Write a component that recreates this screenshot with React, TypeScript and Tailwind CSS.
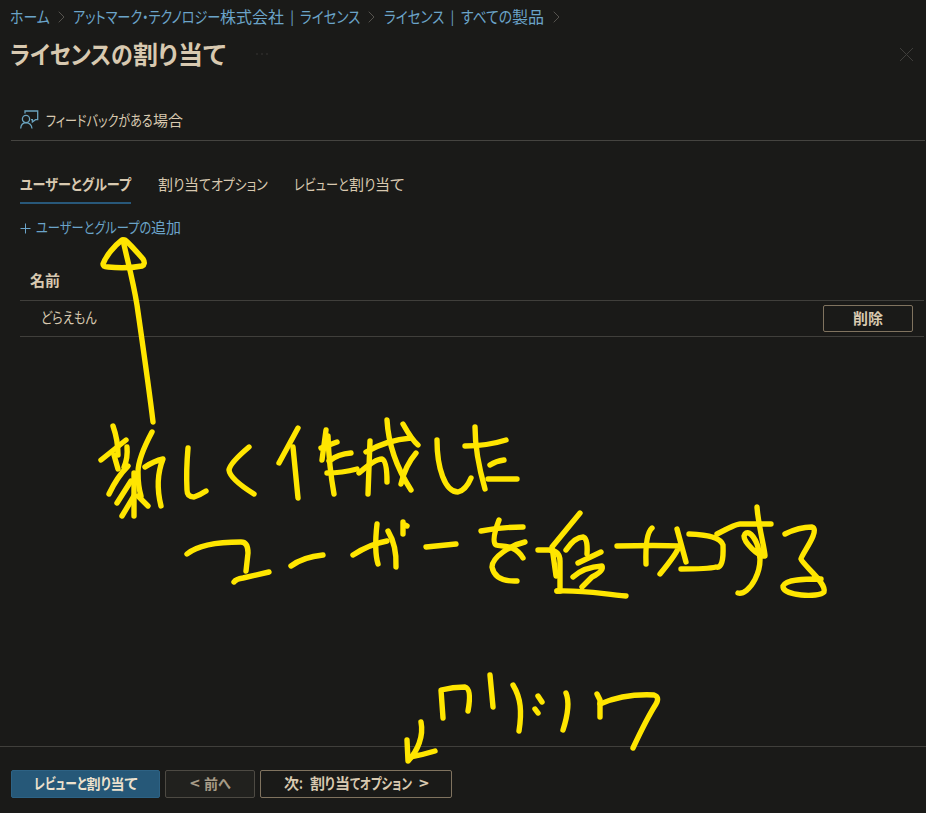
import { useLayoutEffect, useRef, useState } from 'react';

// Narrow kana run: squeezed horizontally to the given width
const Kana = ({ w, children }: { w: number; children: string }) => {
    const ref = useRef<HTMLSpanElement>(null);
    const [scale, setScale] = useState(1);

    useLayoutEffect(() => {
        if (ref.current) setScale(w / ref.current.offsetWidth);
    }, [w, children]);

    return (
        <span className="inline-block whitespace-pre [font-feature-settings:'palt']" style={{ width: w }}>
            <span ref={ref} className="inline-block origin-left" style={{ transform: `scaleX(${scale})` }}>{children}</span>
        </span>
    );
};

const Chevron = () => (
    <svg className="w-[7px] h-3 shrink-0" viewBox="0 0 7 12" fill="none" stroke="#55534e">
        <path d="M.7 .7 6 6 .7 11.3" />
    </svg>
);

// Handwritten notes
const strokes = [
    // arrow to the add link
    'M153 422C149 388 142 340 137 305C133 280 127 259 123 240',
    'M122 240C114 246 106 256 103 264Q103 267 108 267Q126 269 142 266Q146 264 143 259C136 251 129 243 125 240Z',
    // 新
    'M113 426Q118 440 118 455', 'M101 460 126 440', 'M127 447Q128 458 124 467', 'M114 455 118 469',
    'M128 466Q117 477 109 494', 'M131 481 117 503', 'M134 473V516', 'M134 496 122 516', 'M138 496 148 506',
    'M152 432C144 447 138 460 138 472Q138 486 141 496', 'M145 467Q154 461 163 459C157 474 157 490 161 506',
    // しく
    'M188 448Q186 471 187 490Q187 497 194 497Q200 495 206 491', 'M249 447Q230 463 229 470Q230 479 254 494',
    // 作
    'M298 428 279 463', 'M293 447 298 498',
    'M326 430 322 460', 'M321 448 337 442', 'M328 436Q329 466 334 494', 'M329 461Q338 454 351 453', 'M327 473Q342 473 357 469',
    // 成
    'M370 441 368 494', 'M366 452Q387 440 411 438', 'M359 473Q375 459 382 459Q387 461 387 482',
    'M387 420Q389 456 411 490', 'M403 424Q412 440 418 445', 'M416 453Q405 466 401 484',
    // した
    'M437 440C437 468 445 492 458 492Q466 490 471 478', 'M475 427Q475 454 485 489', 'M465 446Q487 446 506 440', 'M490 465Q496 461 504 460', 'M488 479H517',
    // ユーザー
    'M187 554C199 544 221 542 241 542Q248 542 248 553L246 571', 'M234 582Q236 579 243 578L269 572',
    'M291 566Q303 557 323 555', 'M353 555Q370 544 387 541', 'M377 524Q374 551 378 564', 'M388 531Q397 546 396 567',
    'M403 522V534', 'M405 525 407 526', 'M426 547 456 544',
    // を
    'M481 531Q502 527 523 527', 'M499 520Q491 541 496 545C502 547 515 544 523 558', 'M525 542C511 545 492 557 492 567Q495 582 517 581',
    // 追
    'M580 513 552 547 556 576', 'M538 550H549Q560 551 560 561V591H557', 'M557 591C586 590 601 594 626 596',
    'M566 550Q575 537 583 537Q588 538 587 554', 'M578 563 601 552', 'M573 577Q584 567 602 566Q604 571 592 577L582 587',
    // 加
    'M617 546Q658 545 679 546Q678 552 660 574', 'M652 528Q645 534 646 564', 'M677 529 686 562',
    'M689 534Q720 535 723 545Q724 569 716 567Q708 569 681 569',
    // する
    'M717 534Q736 524 740 524H771', 'M757 507C758 524 765 550 765 556C758 557 744 542 744 536C746 530 752 532 757 544C767 570 748 596 738 593',
    'M785 534Q799 527 812 527C821 530 801 555 801 559C803 565 827 583 824 592C819 598 782 596 783 586C786 579 805 579 821 579',
    // arrow to the next button
    'M421 722C424 737 417 751 409 760', 'M407 740 408 761', 'M410 757Q422 755 435 751',
    // クリック
    'M443 718 441 690Q453 687 465 687Q472 689 468 711', 'M490 675 493 707', 'M513 685C521 698 522 712 519 731',
    'M538 696 542 702', 'M535 709 538 713', 'M566 693Q571 705 563 730', 'M597 694 600 700V717', 'M600 704C614 698 634 694 654 695Q660 697 656 704Q647 718 633 748',
];

export default function App() {
    return (
        <div className="relative flex h-[813px] w-[926px] flex-col overflow-hidden bg-[#1a1a18] text-[15px] leading-5 text-[#d8c9b0] font-['Noto_Sans_CJK_JP',sans-serif]">
            {/* Breadcrumb */}
            <nav className="flex h-[31px] items-center pl-[10px] text-[16px] leading-6 text-[#6ba4c9] whitespace-pre">
                <Kana w={40}>ホーム</Kana>
                <span className="flex w-[23px] pl-[8px] pt-0.5"><Chevron /></span>
                <span className="flex w-[288px]">
                    <Kana w={147}>アットマーク・テクノロジー</Kana>株式会社
                    <span className="w-4 text-center text-[14px]">|</span>
                    <Kana w={60}>ライセンス</Kana>
                </span>
                <span className="flex w-[23px] pl-[7px] pt-0.5"><Chevron /></span>
                <Kana w={60}>ライセンス</Kana>
                <span className="w-[17px] text-center text-[14px]">|</span>
                <Kana w={51}>すべての</Kana>製品
                <span className="pl-[9px] pt-0.5"><Chevron /></span>
            </nav>

            {/* Title */}
            <header className="flex h-[46px] items-center justify-between pl-[10px] pr-[13px]">
                <div className="flex items-center">
                    <h1 className="flex -mt-[3px] text-[25px] font-bold leading-9">
                        <Kana w={123}>ライセンスの</Kana>割<Kana w={20}>り</Kana>当<Kana w={23}>て</Kana>
                    </h1>
                    <svg className="ml-[29px] h-1 w-4" viewBox="0 0 16 4" fill="#3b3a37">
                        <circle cx="2" cy="2" r=".8" /><circle cx="7" cy="2" r=".8" /><circle cx="12" cy="2" r=".8" />
                    </svg>
                </div>
                <svg className="size-[13px]" viewBox="0 0 13 13" stroke="#3f3e3b"><path d="M0 0 13 13M13 0 0 13" /></svg>
            </header>

            {/* Toolbar */}
            <div className="ml-[11px] mr-px flex h-16 items-center border-b border-[#454440] pl-[9px] pt-[22px]">
                <svg className="mr-[7px] h-[19px] w-[19px]" viewBox="0 0 19 19" fill="none" stroke="#6ba4bf" strokeWidth="1.3">
                    <circle cx="6" cy="9" r="3.6" />
                    <path d="M.7 18.5Q1 13 6 12.7Q11.3 13 12 18.5M5 3.5V1H17.7V9.7H15.5L12.4 12V9.7H11" />
                </svg>
                <Kana w={107}>フィードバックがある</Kana>場合
            </div>

            {/* Tabs */}
            <div className="mt-[33px] flex h-[30px] gap-[26px] pl-5">
                <div className="flex border-b-2 border-[#28587a] font-bold"><Kana w={111}>ユーザーとグループ</Kana></div>
                <div className="flex pl-px">割<Kana w={11}>り</Kana>当<Kana w={69}>てオプション</Kana></div>
                <div className="flex"><Kana w={55}>レビューと</Kana>割<Kana w={11}>り</Kana>当<Kana w={15}>て</Kana></div>
            </div>

            <a className="mt-[13px] flex pl-5 text-[#6ba4c9]">
                <svg className="mr-[5px] mt-[6px] size-[11px]" viewBox="0 0 11 11" stroke="currentColor"><path d="M.5 5.5H10.5M5.5 .5V10.5" /></svg>
                <Kana w={115}>ユーザーとグループの</Kana>追加
            </a>

            {/* Table */}
            <div className="ml-5 mr-0.5 mt-[23px]">
                <div className="flex h-[41px] items-center border-b border-[#403f3b] pl-[10px] font-bold">名前</div>
                <div className="flex h-9 items-center justify-between border-b border-[#403f3b] pl-[21px] pr-[11px]">
                    <span className="-mt-[3px]"><Kana w={56}>どらえもん</Kana></span>
                    <button className="h-[27px] w-[90px] rounded-[2px] border border-[#80735f] pb-0.5 font-bold leading-5">削除</button>
                </div>
            </div>

            {/* Footer */}
            <footer className="mt-auto flex h-[67px] gap-[5px] border-t border-[#403f3b] pl-[11px] pt-[23px] font-bold whitespace-pre">
                <button className="flex h-7 w-[149px] items-center justify-center rounded-[2px] border border-[#2d6284] bg-[#265878] pb-[3px] text-[#eee2ce]">
                    <Kana w={53}>レビューと</Kana><span className="text-[14px]">割</span><Kana w={10}>り</Kana><span className="text-[14px]">当</span><Kana w={13}>て</Kana>
                </button>
                <button className="flex h-7 w-[90px] items-center justify-center rounded-[2px] border border-[#4d4a43] bg-[#21211e] pb-[3px] text-[#a69b87]">
                    <span className="mr-[5px]"><Kana w={10}>{'<'}</Kana></span><span className="text-[14px]">前</span><Kana w={13}>へ</Kana>
                </button>
                <button className="flex h-7 w-[192px] items-center justify-center rounded-[2px] border border-[#80735f] pb-[3px]">
                    次<span className="mr-[7px]"><Kana w={4}>:</Kana></span>割<Kana w={10}>り</Kana>当<Kana w={62}>てオプション</Kana><span className="ml-[6px]"><Kana w={10}>{'>'}</Kana></span>
                </button>
            </footer>

            <svg className="pointer-events-none absolute inset-0" width="926" height="813" fill="none" stroke="#ffe600" strokeWidth="5.4" strokeLinecap="round" strokeLinejoin="round">
                {strokes.map((d) => <path key={d} d={d} />)}
            </svg>
        </div>
    );
}
